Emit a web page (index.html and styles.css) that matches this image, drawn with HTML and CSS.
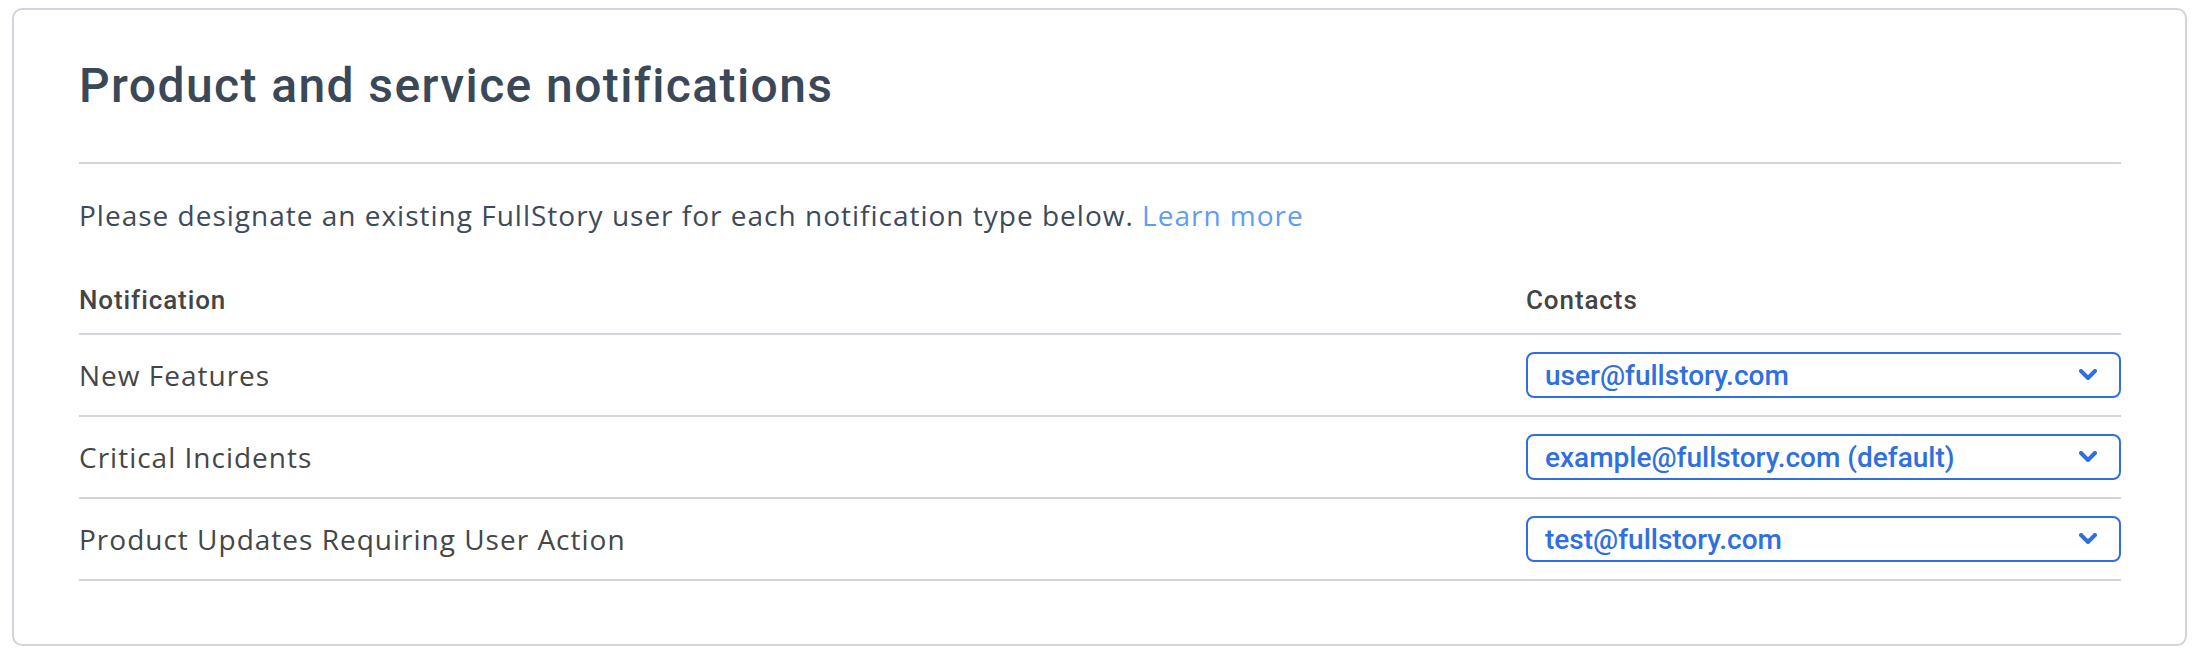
FILE: index.html
```html
<!DOCTYPE html>
<html lang="en">
<head>
<meta charset="utf-8">
<title>Product and service notifications</title>
<link rel="stylesheet" href="styles.css">
</head>
<body>
<section class="card">
  <h1 class="title">Product and service notifications</h1>
  <hr class="divider">
  <p class="intro">Please designate an existing FullStory user for each notification type below. <a class="link" href="#">Learn more</a></p>
  <div class="table">
    <div class="row head">
      <div class="cell">Notification</div>
      <div class="cell">Contacts</div>
    </div>
    <div class="row">
      <div class="cell">New Features</div>
      <div class="cell"><div class="select"><span>user@fullstory.com</span><svg class="chev" viewBox="0 0 18 12" width="18" height="12"><path d="M2 2 L9 9 L16 2" fill="none" stroke="currentColor" stroke-width="4" stroke-linecap="round" stroke-linejoin="round"/></svg></div></div>
    </div>
    <div class="row">
      <div class="cell">Critical Incidents</div>
      <div class="cell"><div class="select"><span>example@fullstory.com (default)</span><svg class="chev" viewBox="0 0 18 12" width="18" height="12"><path d="M2 2 L9 9 L16 2" fill="none" stroke="currentColor" stroke-width="4" stroke-linecap="round" stroke-linejoin="round"/></svg></div></div>
    </div>
    <div class="row">
      <div class="cell">Product Updates Requiring User Action</div>
      <div class="cell"><div class="select"><span>test@fullstory.com</span><svg class="chev" viewBox="0 0 18 12" width="18" height="12"><path d="M2 2 L9 9 L16 2" fill="none" stroke="currentColor" stroke-width="4" stroke-linecap="round" stroke-linejoin="round"/></svg></div></div>
    </div>
  </div>
</section>
</body>
</html>
```
FILE: styles.css
```css
* { box-sizing: border-box; }
html, body { margin: 0; padding: 0; background: #ffffff; }
body { font-family: Roboto, "Liberation Sans", sans-serif; }

.card {
  margin: 8px 15px 0 12px;
  height: 638px;
  border: 2px solid #d3d2de;
  border-radius: 10px;
  padding: 46px 64px 0 65px;
}

.title {
  margin: 0 0 46px;
  font-size: 48px;
  line-height: 60px;
  font-weight: 500;
  letter-spacing: 1.4px;
  color: #3a4858;
}

.divider {
  margin: 0;
  border: 0;
  border-top: 2px solid #d3d2de;
}

.intro {
  margin: 31px 0 0;
  font-family: "Open Sans", Roboto, sans-serif;
  font-size: 28px;
  line-height: 40px;
  letter-spacing: 1px;
  color: #3d4a5a;
}

.link { color: #5c9df5; text-decoration: none; }

.table { margin-top: 47px; }

.row {
  display: grid;
  grid-template-columns: 1fr 595px;
  align-items: center;
  height: 82px;
  border-bottom: 2px solid #d3d2de;
  font-family: "Open Sans", Roboto, sans-serif;
  font-size: 28px;
  letter-spacing: 1px;
  color: #464646;
}

.row.head {
  height: auto;
  padding-bottom: 15px;
  font-family: Roboto, "Liberation Sans", sans-serif;
  font-size: 26px;
  line-height: 36px;
  font-weight: 500;
  letter-spacing: 0.9px;
  color: #444444;
}

.select {
  display: flex;
  align-items: center;
  justify-content: space-between;
  height: 46px;
  border: 2px solid #2f6fe0;
  border-radius: 8px;
  padding: 0 22px 0 17px;
  font-family: Roboto, "Liberation Sans", sans-serif;
  letter-spacing: 0;
  color: #2f6fe0;
  font-weight: 500;
  font-size: 28px;
}

.chev { display: block; color: #2f6fe0; }
```
